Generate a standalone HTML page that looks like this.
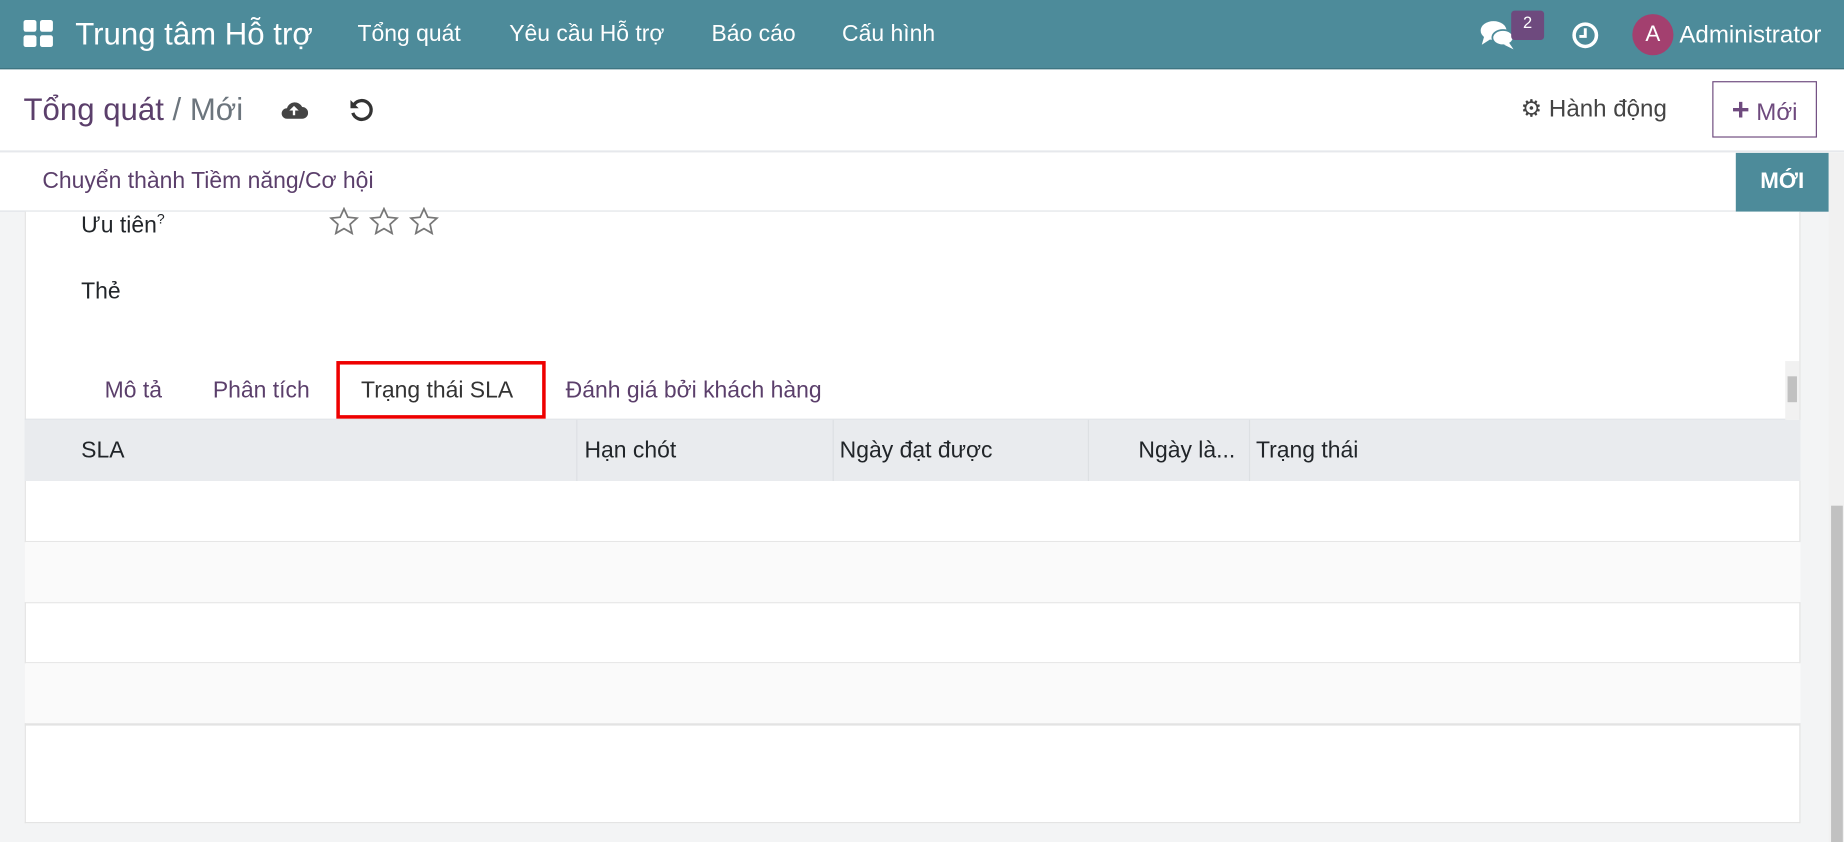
<!DOCTYPE html>
<html><head><meta charset="utf-8"><style>
*{box-sizing:border-box;margin:0;padding:0}
body{width:1844px;height:842px;overflow:hidden;background:#f4f5f6;font-family:"Liberation Sans",sans-serif}
#w{width:1568px;height:716px;transform:scale(1.17602);transform-origin:0 0;position:relative;background:#f3f4f5}
.a{position:absolute;white-space:nowrap}
.nav{left:0;top:0;width:1568px;height:59px;background:#4d8b9a;border-bottom:1px solid #3a6f7c;color:#fff}
.cp{left:0;top:59px;width:1568px;height:70px;background:#fff;border-bottom:1px solid #dee2e6}
.sb{left:0;top:130px;width:1555px;height:50px;background:#fff;border-bottom:1px solid #dee2e6}
.sheet{left:21px;top:180px;width:1510px;height:520px;background:#fff;border:1px solid #e3e3e3;border-top:none}
.t{font-size:19.5px;color:#212529}
.hd{font-size:19.5px;color:#212529}
</style></head><body><div id="w">
<div class="a nav">
 <svg class="a" style="left:20px;top:17px" width="26" height="24" viewBox="0 0 26 24"><rect x="0" y="0" width="11" height="10" rx="2" fill="#fff"/><rect x="14" y="0" width="11" height="10" rx="2" fill="#fff"/><rect x="0" y="13" width="11" height="10" rx="2" fill="#fff"/><rect x="14" y="13" width="11" height="10" rx="2" fill="#fff"/></svg>
 <div class="a" style="left:64px;top:14px;font-size:26.5px">Trung tâm Hỗ trợ</div>
 <div class="a" style="left:304px;top:18px;font-size:19.5px">Tổng quát</div>
 <div class="a" style="left:433px;top:18px;font-size:19.5px">Yêu cầu Hỗ trợ</div>
 <div class="a" style="left:605px;top:18px;font-size:19.5px">Báo cáo</div>
 <div class="a" style="left:716px;top:18px;font-size:19.5px">Cấu hình</div>
 <svg class="a" style="left:1259px;top:17px" width="30" height="26" viewBox="0 0 30 26"><ellipse cx="11" cy="9" rx="11" ry="8" fill="#fff"/><path d="M3 14 L1 21 L9 16Z" fill="#fff"/><ellipse cx="19" cy="15" rx="9" ry="6.5" fill="#fff" stroke="#4d8b9a" stroke-width="1.5"/><path d="M24 19 L28 25 L20 21Z" fill="#fff"/></svg>
 <div class="a" style="left:1285px;top:9px;width:28px;height:25px;background:#6e4a7e;border-radius:3px;font-size:14px;text-align:center;line-height:20px">2</div>
 <svg class="a" style="left:1336px;top:18px" width="24" height="24" viewBox="0 0 24 24"><circle cx="12" cy="12" r="9.5" fill="none" stroke="#fff" stroke-width="3"/><path d="M12 6v7h-5" fill="none" stroke="#fff" stroke-width="2.5"/></svg>
 <div class="a" style="left:1388px;top:12px;width:35px;height:35px;border-radius:50%;background:#a3406f;font-size:19px;text-align:center;line-height:35px">A</div>
 <div class="a" style="left:1428px;top:18px;font-size:20.5px">Administrator</div>
</div>
<div class="a cp">
 <div class="a" style="left:20px;top:19px;font-size:26.5px;color:#5b3f6b">Tổng quát <span style="color:#6c757d">/ Mới</span></div>
 <svg class="a" style="left:238px;top:24px" width="24" height="20" viewBox="0 0 24 20"><path d="M6 18h13a5 5 0 0 0 0-10a7 7 0 0 0-13 1a4.5 4.5 0 0 0 0 9z" fill="#444"/><path d="M12 7l-4 4h3v4h2v-4h3z" fill="#fff"/></svg>
 <svg class="a" style="left:296px;top:23px" width="22" height="22" viewBox="0 0 22 22"><path d="M5 7a8 8 0 1 1-1 7" fill="none" stroke="#333" stroke-width="2.8"/><path d="M2 3v7h7z" fill="#333"/></svg>
 <div class="a" style="left:1293px;top:21px;font-size:20.5px;color:#444">&#9881; Hành động</div>
 <div class="a" style="left:1456px;top:10px;width:89px;height:48px;border:1px solid #6e4a7e;font-size:20.5px;color:#6e4a7e;line-height:46px;text-align:center"><b style="font-size:26px">+</b> Mới</div>
</div>
<div class="a sb">
 <div class="a" style="left:36px;top:13px;font-size:19.5px;color:#5b3f6b">Chuyển thành Tiềm năng/Cơ hội</div>
 <div class="a" style="left:1476px;top:0;width:79px;height:50px;background:#4d8b9a;color:#fff;font-size:19px;font-weight:bold;text-align:center;line-height:50px">MỚI</div>
</div>
<div class="a" style="left:1555px;top:130px;width:13px;height:586px;background:#f1f1f1"></div>
<div class="a" style="left:1557px;top:430px;width:10px;height:286px;background:#c1c1c1"></div>
<div class="a sheet"></div>
<div class="a t" style="left:69px;top:179px">Ưu tiên<sup style="font-size:12px">?</sup></div>
<svg class="a" style="left:280px;top:176px" width="96" height="26" viewBox="0 0 96 26"><g fill="none" stroke="#777" stroke-width="1.5"><path id="s" d="M12.5 1.5l3.3 7.2 7.7.8-5.8 5.2 1.7 7.7-6.9-4-6.9 4 1.7-7.7-5.8-5.2 7.7-.8z"/><use href="#s" x="34"/><use href="#s" x="68"/></g></svg>
<div class="a t" style="left:69px;top:237px">Thẻ</div>
<div class="a" style="left:21px;top:356px;width:1498px;height:1px;background:#dee2e6"></div>
<div class="a" style="left:1518px;top:307px;width:12px;height:50px;background:#f1f1f1"></div>
<div class="a" style="left:1520px;top:320px;width:8px;height:22px;background:#c1c1c1"></div>
<div class="a" style="left:89px;top:321px;font-size:19.5px;color:#5b3f6b">Mô tả</div>
<div class="a" style="left:181px;top:321px;font-size:19.5px;color:#5b3f6b">Phân tích</div>
<div class="a" style="left:286px;top:307px;width:178px;height:49px;border:3px solid #e00;background:#fff"></div>
<div class="a" style="left:307px;top:321px;font-size:19.5px;color:#333">Trạng thái SLA</div>
<div class="a" style="left:481px;top:321px;font-size:19.5px;color:#5b3f6b">Đánh giá bởi khách hàng</div>
<div class="a" style="left:21px;top:357px;width:1510px;height:52px;background:#e9ebee"></div>
<div class="a" style="left:490px;top:357px;width:1px;height:52px;background:#dde0e3"></div>
<div class="a" style="left:708px;top:357px;width:1px;height:52px;background:#dde0e3"></div>
<div class="a" style="left:925px;top:357px;width:1px;height:52px;background:#dde0e3"></div>
<div class="a" style="left:1062px;top:357px;width:1px;height:52px;background:#dde0e3"></div>
<div class="a hd" style="left:69px;top:372px">SLA</div>
<div class="a hd" style="left:497px;top:372px">Hạn chót</div>
<div class="a hd" style="left:714px;top:372px">Ngày đạt được</div>
<div class="a hd" style="left:968px;top:372px">Ngày là...</div>
<div class="a hd" style="left:1068px;top:372px">Trạng thái</div>
<div class="a" style="left:21px;top:460px;width:1510px;height:1px;background:#e6e6e6"></div>
<div class="a" style="left:21px;top:461px;width:1510px;height:51px;background:#fafafa"></div>
<div class="a" style="left:21px;top:512px;width:1510px;height:1px;background:#e6e6e6"></div>
<div class="a" style="left:21px;top:563px;width:1510px;height:1px;background:#e6e6e6"></div>
<div class="a" style="left:21px;top:564px;width:1510px;height:51px;background:#fafafa"></div>
<div class="a" style="left:21px;top:615px;width:1510px;height:2px;background:#e3e3e3"></div>
</div></body></html>
